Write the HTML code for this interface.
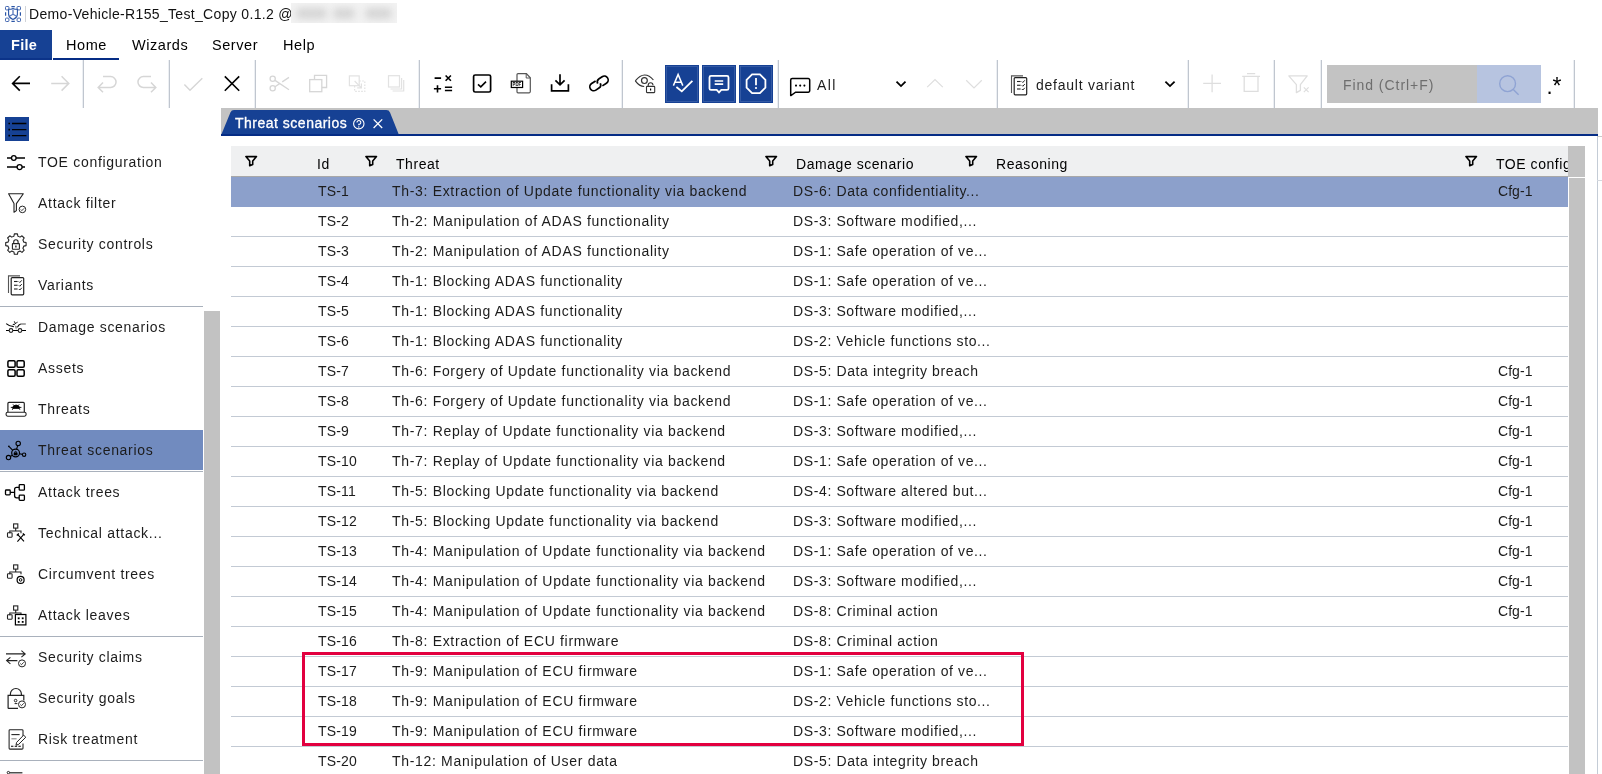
<!DOCTYPE html><html><head><meta charset="utf-8"><title>Threat scenarios</title><style>
*{box-sizing:border-box;margin:0;padding:0}
html,body{width:1602px;height:774px;overflow:hidden;background:#fff}
body{font-family:"Liberation Sans",sans-serif;font-size:14px;color:#1c1c1c;position:relative}
#w{position:absolute;left:0;top:0;width:1602px;height:774px;overflow:hidden;transform:translateZ(0)}
.g{position:absolute;left:0;top:0}
.a{position:absolute;white-space:nowrap}
.t{position:absolute;white-space:nowrap;line-height:20px;height:20px;letter-spacing:.6px}
.menu .t{top:35px;font-size:14.5px;letter-spacing:.55px;color:#000}
.sep{position:absolute;width:2px;top:60px;height:48px;background:linear-gradient(90deg,#eceff3 0,#eceff3 50%,#c0c6cf 50%,#c0c6cf 100%)}
.sl{position:absolute;height:1px;left:0;width:203px;background:#a9b1bc}
.item{position:absolute;left:0;width:203px;height:40px}
.item.sel{background:#718bbf}
.item span{position:absolute;left:38px;top:10px;line-height:20px;white-space:nowrap;letter-spacing:.7px}
.hd{position:absolute;left:231px;top:146px;width:1337px;height:31px;background:#eff0f1;border-bottom:1px solid #a8a8a8}
.hd span{position:absolute;top:8px;line-height:20px;white-space:nowrap;color:#000;letter-spacing:.55px}
.row{position:absolute;left:231px;width:1337px;height:30px;border-bottom:1px solid #c3cad4}
.row.sel{background:#8ca0cb;border-bottom-color:#8ca0cb}
.row span{position:absolute;top:4px;line-height:20px;white-space:nowrap}
.c1{left:87px;letter-spacing:.15px}
.c2{left:161px;letter-spacing:.68px}
.c3{left:562px;letter-spacing:.62px}
.c4{left:1267px;letter-spacing:.05px}
#ov{position:absolute;left:0;top:0;overflow:visible}
</style></head><body><div id="w">
<div class="g titlebar">
<div class="a" style="left:25px;top:6px;width:1px;height:16px;background:#d0d3d8"></div>
<div class="t" style="left:29px;top:4px;letter-spacing:.33px;color:#111">Demo-Vehicle-R155_Test_Copy 0.1.2 @</div>
<div class="a" style="left:291px;top:3px;width:106px;height:20px;background:#f2f2f2;overflow:hidden"><div class="a" style="left:5px;top:5px;width:31px;height:11px;background:#d6d6d6;filter:blur(3.5px);border-radius:5px"></div><div class="a" style="left:42px;top:5px;width:22px;height:11px;background:#d6d6d6;filter:blur(3.5px);border-radius:5px"></div><div class="a" style="left:74px;top:5px;width:27px;height:11px;background:#d6d6d6;filter:blur(3.5px);border-radius:5px"></div></div>
</div>
<div class="g menu">
<div class="a" style="left:0;top:30px;width:52px;height:30px;background:#164194;border-bottom:2px solid #0b3389"></div>
<div class="t" style="left:11px;color:#fff;font-weight:bold;letter-spacing:.3px">File</div>
<div class="a" style="left:53px;top:58px;width:66px;height:2px;background:#052c85"></div>
<div class="t" style="left:66px">Home</div>
<div class="t" style="left:132px">Wizards</div>
<div class="t" style="left:212px">Server</div>
<div class="t" style="left:283px">Help</div>
</div>
<div class="g toolbar">
<div class="sep" style="left:82px"></div>
<div class="sep" style="left:168px"></div>
<div class="sep" style="left:254px"></div>
<div class="sep" style="left:418px"></div>
<div class="sep" style="left:621px"></div>
<div class="sep" style="left:777px"></div>
<div class="sep" style="left:996px"></div>
<div class="sep" style="left:1187px"></div>
<div class="sep" style="left:1273px"></div>
<div class="sep" style="left:1320px"></div>
<div class="sep" style="left:1573px"></div>
<div class="t" style="left:817px;top:75px;letter-spacing:1.4px">All</div>
<div class="t" style="left:1036px;top:75px;letter-spacing:.75px">default variant</div>
<div class="a" style="left:1327px;top:65px;width:150px;height:38px;background:#c3c3c3"></div>
<div class="a" style="left:1477px;top:65px;width:64px;height:38px;background:#b7c4e0"></div>
<div class="t" style="left:1343px;top:75px;color:#6e6e6e;letter-spacing:.95px">Find (Ctrl+F)</div>
<div class="t" style="left:1546.5px;top:77px;font-size:22px;color:#000;letter-spacing:0">.</div>
<div class="t" style="left:1552.5px;top:76px;font-size:23px;color:#000;letter-spacing:0">*</div>
</div>
<div class="g sidebar">
<div class="a" style="left:5px;top:117px;width:24px;height:24px;background:#164194"></div>
<div class="sl" style="top:306px"></div>
<div class="sl" style="top:471px"></div>
<div class="sl" style="top:636px"></div>
<div class="sl" style="top:760px"></div>
<div class="item" style="top:142px"><span>TOE configuration</span></div>
<div class="item" style="top:183px"><span>Attack filter</span></div>
<div class="item" style="top:224px"><span>Security controls</span></div>
<div class="item" style="top:265px"><span>Variants</span></div>
<div class="item" style="top:307px"><span>Damage scenarios</span></div>
<div class="item" style="top:348px"><span>Assets</span></div>
<div class="item" style="top:389px"><span>Threats</span></div>
<div class="item sel" style="top:430px"><span>Threat scenarios</span></div>
<div class="item" style="top:472px"><span>Attack trees</span></div>
<div class="item" style="top:513px"><span>Technical attack...</span></div>
<div class="item" style="top:554px"><span>Circumvent trees</span></div>
<div class="item" style="top:595px"><span>Attack leaves</span></div>
<div class="item" style="top:637px"><span>Security claims</span></div>
<div class="item" style="top:678px"><span>Security goals</span></div>
<div class="item" style="top:719px"><span>Risk treatment</span></div>
<div class="a" style="left:204px;top:311px;width:16px;height:463px;background:#c2c2c2"></div>
</div>
<div class="g tabs">
<div class="a" style="left:221px;top:108px;width:1377px;height:28px;background:#c3c3c3;border-bottom:2px solid #052c85"></div>
<div class="a" style="left:1597px;top:136px;width:1px;height:638px;background:#c4ccd6"></div>
<div class="a" style="left:1597px;top:136px;width:5px;height:1px;background:#c9c9c9"></div>
<div class="a" style="left:1597px;top:180px;width:5px;height:1px;background:#d5d9df"></div>
</div>
<div class="g grid">
<div class="hd">
<span style="left:86px">Id</span>
<span style="left:165px">Threat</span>
<span style="left:565px">Damage scenario</span>
<span style="left:765px">Reasoning</span>
<span style="left:1265px;width:72px;overflow:hidden">TOE config</span>
</div>
<div class="a" style="left:1568px;top:146px;width:17px;height:31px;background:#c2c2c2"></div>
<div class="a" style="left:1569px;top:178px;width:16px;height:596px;background:#c2c2c2"></div>
<div class="row sel" style="top:177px"><span class="c1">TS-1</span><span class="c2">Th-3: Extraction of Update functionality via backend</span><span class="c3">DS-6: Data confidentiality...</span><span class="c4">Cfg-1</span></div>
<div class="row" style="top:207px"><span class="c1">TS-2</span><span class="c2">Th-2: Manipulation of ADAS functionality</span><span class="c3">DS-3: Software modified,...</span></div>
<div class="row" style="top:237px"><span class="c1">TS-3</span><span class="c2">Th-2: Manipulation of ADAS functionality</span><span class="c3">DS-1: Safe operation of ve...</span></div>
<div class="row" style="top:267px"><span class="c1">TS-4</span><span class="c2">Th-1: Blocking ADAS functionality</span><span class="c3">DS-1: Safe operation of ve...</span></div>
<div class="row" style="top:297px"><span class="c1">TS-5</span><span class="c2">Th-1: Blocking ADAS functionality</span><span class="c3">DS-3: Software modified,...</span></div>
<div class="row" style="top:327px"><span class="c1">TS-6</span><span class="c2">Th-1: Blocking ADAS functionality</span><span class="c3">DS-2: Vehicle functions sto...</span></div>
<div class="row" style="top:357px"><span class="c1">TS-7</span><span class="c2">Th-6: Forgery of Update functionality via backend</span><span class="c3">DS-5: Data integrity breach</span><span class="c4">Cfg-1</span></div>
<div class="row" style="top:387px"><span class="c1">TS-8</span><span class="c2">Th-6: Forgery of Update functionality via backend</span><span class="c3">DS-1: Safe operation of ve...</span><span class="c4">Cfg-1</span></div>
<div class="row" style="top:417px"><span class="c1">TS-9</span><span class="c2">Th-7: Replay of Update functionality via backend</span><span class="c3">DS-3: Software modified,...</span><span class="c4">Cfg-1</span></div>
<div class="row" style="top:447px"><span class="c1">TS-10</span><span class="c2">Th-7: Replay of Update functionality via backend</span><span class="c3">DS-1: Safe operation of ve...</span><span class="c4">Cfg-1</span></div>
<div class="row" style="top:477px"><span class="c1">TS-11</span><span class="c2">Th-5: Blocking Update functionality via backend</span><span class="c3">DS-4: Software altered but...</span><span class="c4">Cfg-1</span></div>
<div class="row" style="top:507px"><span class="c1">TS-12</span><span class="c2">Th-5: Blocking Update functionality via backend</span><span class="c3">DS-3: Software modified,...</span><span class="c4">Cfg-1</span></div>
<div class="row" style="top:537px"><span class="c1">TS-13</span><span class="c2">Th-4: Manipulation of Update functionality via backend</span><span class="c3">DS-1: Safe operation of ve...</span><span class="c4">Cfg-1</span></div>
<div class="row" style="top:567px"><span class="c1">TS-14</span><span class="c2">Th-4: Manipulation of Update functionality via backend</span><span class="c3">DS-3: Software modified,...</span><span class="c4">Cfg-1</span></div>
<div class="row" style="top:597px"><span class="c1">TS-15</span><span class="c2">Th-4: Manipulation of Update functionality via backend</span><span class="c3">DS-8: Criminal action</span><span class="c4">Cfg-1</span></div>
<div class="row" style="top:627px"><span class="c1">TS-16</span><span class="c2">Th-8: Extraction of ECU firmware</span><span class="c3">DS-8: Criminal action</span></div>
<div class="row" style="top:657px"><span class="c1">TS-17</span><span class="c2">Th-9: Manipulation of ECU firmware</span><span class="c3">DS-1: Safe operation of ve...</span></div>
<div class="row" style="top:687px"><span class="c1">TS-18</span><span class="c2">Th-9: Manipulation of ECU firmware</span><span class="c3">DS-2: Vehicle functions sto...</span></div>
<div class="row" style="top:717px"><span class="c1">TS-19</span><span class="c2">Th-9: Manipulation of ECU firmware</span><span class="c3">DS-3: Software modified,...</span></div>
<div class="row" style="top:747px"><span class="c1">TS-20</span><span class="c2">Th-12: Manipulation of User data</span><span class="c3">DS-5: Data integrity breach</span></div>
<div class="a" style="left:302px;top:652px;width:722px;height:94px;border:3px solid #e2003f"></div>
</div>
<svg id="ov" width="1602" height="774" viewBox="0 0 1602 774" fill="none" stroke-linecap="butt"><path d="M221.6 134L230.4 112.4Q231.4 110 234 110H386.4Q389 110 390 112.4L398.6 134Z" fill="#164194"/><rect x="5.5" y="6.5" width="3.4" height="3.4" rx="0.8" stroke="#3a60ac" stroke-width="0.95" fill="none" /><rect x="17.1" y="6.5" width="3.4" height="3.4" rx="0.8" stroke="#3a60ac" stroke-width="0.95" fill="none" /><rect x="5.5" y="18.1" width="3.4" height="3.4" rx="0.8" stroke="#3a60ac" stroke-width="0.95" fill="none" /><rect x="17.1" y="18.1" width="3.4" height="3.4" rx="0.8" stroke="#3a60ac" stroke-width="0.95" fill="none" /><path d="M11.4 6.6H14.8 M11.4 21.4H14.8 M5.6 12.3V15.7 M20.4 12.3V15.7" stroke="#2a55a6" stroke-width="1.2" fill="none" /><path d="M13 8.4L15 9.3H17.4V14.4Q17.2 17.6 13 19.4Q8.8 17.6 8.6 14.4V9.3H11Z" stroke="#2a55a6" stroke-width="1.1" fill="none" stroke-linejoin="round"/><path d="M13 9.6V14.2 M13 14.2L9.4 16.3 M13 14.2L16.6 16.3" stroke="#5b7bbd" stroke-width="1.3" fill="none" /><path d="M30 83.4H13 M19.8 76.2L12.6 83.4L19.8 90.6" stroke="#000" stroke-width="1.6" fill="none" /><path d="M51.2 83.4H68.4 M61.6 76.2L68.8 83.4L61.6 90.6" stroke="#d6d6d6" stroke-width="1.5" fill="none" /><path d="M103 76.6H110.6A5.45 5.45 0 0 1 110.6 87.5H98.6 M103 82.6L98.2 87.5L103 92.3" stroke="#d6d6d6" stroke-width="1.5" fill="none" /><path d="M151 76.6H143.4A5.45 5.45 0 0 0 143.4 87.5H155.4 M151 82.6L155.8 87.5L151 92.3" stroke="#d6d6d6" stroke-width="1.5" fill="none" /><path d="M184.4 84.6L190 90.3L202.3 78.2" stroke="#d6d6d6" stroke-width="1.4" fill="none" /><path d="M224.8 76.4L239.2 90.7 M239.2 76.4L224.8 90.7" stroke="#000" stroke-width="1.6" fill="none" /><circle cx="272.7" cy="78.8" r="2.6" stroke="#d6d6d6" stroke-width="1.3" fill="none"/><circle cx="272.7" cy="88.3" r="2.6" stroke="#d6d6d6" stroke-width="1.3" fill="none"/><path d="M275 80.4L289 89.8 M275 86.7L280 83.4 M282.2 81.9L289 77.4" stroke="#d6d6d6" stroke-width="1.3" fill="none" /><path d="M314.5 79.4V75.4H326.6V87.5H322" stroke="#d6d6d6" stroke-width="1.3" fill="none" /><rect x="309.7" y="79.6" width="12.1" height="12.1" rx="0" stroke="#d6d6d6" stroke-width="1.3" fill="none" /><rect x="349.4" y="75.9" width="9.8" height="9.8" rx="0" stroke="#e2e2e2" stroke-width="1.2" fill="none" /><path d="M359.2 81H364.8V91.4H354.6V85.7" stroke="#e2e2e2" stroke-width="1.2" fill="none" stroke-dasharray="1.6 1.4"/><path d="M354.6 81L361.4 87.8 M361.4 83.6V87.8H357.2" stroke="#e2e2e2" stroke-width="1.2" fill="none" /><rect x="388.5" y="75.7" width="11" height="11.3" rx="0" stroke="#e2e2e2" stroke-width="1.2" fill="none" /><path d="M390.5 89H401.6V78 M392.6 91H403.7V80" stroke="#e2e2e2" stroke-width="1.2" fill="none" /><path d="M434.6 78.1H441.1 M445.6 75.5L450.9 80.8 M450.9 75.5L445.6 80.8 M433.9 88.8H441.1 M437.5 85.2V92.4 M444.9 87.3H452.1 M444.9 90.5H452.1" stroke="#000" stroke-width="1.6" fill="none" /><rect x="473.6" y="75" width="17" height="17" rx="1.6" stroke="#000" stroke-width="1.7" fill="none" /><path d="M478 84.3L480.8 86.8L486 81.6" stroke="#000" stroke-width="1.6" fill="none" /><path d="M517 81V74.6Q517 73.6 518 73.6H526.4L530.3 77.8V91.6Q530.3 92.8 529.2 92.8H518Q517 92.8 517 91.8V87.6" stroke="#555" stroke-width="1.2" fill="none" /><path d="M526.2 73.8V78H530.2" stroke="#555" stroke-width="1" fill="none" /><rect x="511.3" y="81.2" width="11.3" height="6.3" rx="0" stroke="#000" stroke-width="1.2" fill="#fff" /><text x="512.6" y="86.3" font-family="Liberation Sans,sans-serif" font-size="4.6" font-weight="bold" fill="#000" textLength="8.6" lengthAdjust="spacingAndGlyphs">PDF</text><path d="M560 74.2V84.6 M555.4 80.3L560 84.9L564.6 80.3 M551.6 84.3V90.8H568.4V84.3" stroke="#000" stroke-width="1.7" fill="none" /><g transform="translate(599 83.4) rotate(-33)" fill="none" stroke="#000" stroke-width="1.7"><path d="M-1.5 -3.9H-6.3A3.9 3.9 0 0 0 -6.3 3.9H-2.6A3.9 3.9 0 0 0 1.2 0.6"/><path d="M1.5 3.9H6.3A3.9 3.9 0 0 0 6.3 -3.9H2.6A3.9 3.9 0 0 0 -1.2 -0.6"/></g><path d="M635.3 80.8Q640 75 644.6 75Q649.4 75 653.4 80 M635.3 80.8Q639.5 86.4 644.2 86.5" stroke="#333" stroke-width="1.2" fill="none" /><circle cx="644.4" cy="80.6" r="2.9" stroke="#333" stroke-width="1.2" fill="none"/><rect x="646.5" y="86.4" width="8.2" height="6.2" rx="0.6" stroke="#333" stroke-width="1.1" fill="#fff" /><path d="M648.2 86.2V85.2A2.4 2.4 0 0 1 653 85.2" stroke="#333" stroke-width="1.1" fill="none" /><path d="M650.6 88.6V90.4" stroke="#000" stroke-width="1.2" fill="none" /><rect x="665" y="65" width="34" height="38" fill="#164194"/><rect x="666.5" y="66.5" width="31" height="35" fill="none" stroke="#4a6bb0" stroke-width="0.6"/><rect x="702" y="65" width="34" height="38" fill="#164194"/><rect x="703.5" y="66.5" width="31" height="35" fill="none" stroke="#4a6bb0" stroke-width="0.6"/><rect x="739" y="65" width="34" height="38" fill="#164194"/><rect x="740.5" y="66.5" width="31" height="35" fill="none" stroke="#4a6bb0" stroke-width="0.6"/><path d="M673.4 85.6L678.1 74.4L682.8 85.6 M674.9 82.2H681.3" stroke="#fff" stroke-width="1.5" fill="none" /><path d="M676.4 87L681.8 91.4L692.4 80.8" stroke="#fff" stroke-width="1.8" fill="none" /><path d="M711 75.9H727A1.5 1.5 0 0 1 728.5 77.4V88.4A1.5 1.5 0 0 1 727 89.9H721.3L719 92.4L716.7 89.9H711A1.5 1.5 0 0 1 709.5 88.4V77.4A1.5 1.5 0 0 1 711 75.9Z" stroke="#fff" stroke-width="1.8" fill="none" /><path d="M714.7 81H723.2 M714.7 84.2H723.2" stroke="#fff" stroke-width="1.7" fill="none" /><path d="M765.4 87.7L759.9 93.2L752.1 93.2L746.6 87.7L746.6 79.9L752.1 74.4L759.9 74.4L765.4 79.9Z" stroke="#fff" stroke-width="1.8" fill="none" /><path d="M756 78V85.2" stroke="#fff" stroke-width="1.8" fill="none" /><circle cx="756" cy="88" r="1.1" stroke="none" stroke-width="0" fill="#fff"/><path d="M792.2 78.6H808.2A1.5 1.5 0 0 1 809.7 80.1V90.7A1.5 1.5 0 0 1 808.2 92.2H795.6L791 95.6A0.3 0.3 0 0 1 790.7 95.4V80.1A1.5 1.5 0 0 1 792.2 78.6Z" stroke="#000" stroke-width="1.5" fill="none" /><circle cx="796" cy="85.6" r="1.05" stroke="none" stroke-width="0" fill="#000"/><circle cx="800.2" cy="85.6" r="1.05" stroke="none" stroke-width="0" fill="#000"/><circle cx="804.4" cy="85.6" r="1.05" stroke="none" stroke-width="0" fill="#000"/><path d="M896.5 81.6L901 86.1L905.5 81.6" stroke="#000" stroke-width="1.8" fill="none" /><path d="M1165.4 81.6L1170 86.1L1174.6 81.6" stroke="#000" stroke-width="1.8" fill="none" /><path d="M927.2 87.1L935 79.5L942.8 87.1" stroke="#dedede" stroke-width="1.2" fill="none" /><path d="M966.2 80.3L974 88L981.8 80.3" stroke="#dedede" stroke-width="1.2" fill="none" /><path d="M1011.5 92.9V75.9H1023" stroke="#555" stroke-width="1.1" fill="none" /><rect x="1014.2" y="77.60000000000001" width="12.5" height="17.2" rx="1" stroke="#222" stroke-width="1.2" fill="none" /><path d="M1017 81.5H1020.6" stroke="#222" stroke-width="1.1" fill="none" /><path d="M1021.8 81.5l1 1l2 -2.2" stroke="#222" stroke-width="1" fill="none" /><path d="M1017 85.25H1020.6" stroke="#222" stroke-width="1.1" fill="none" /><path d="M1021.8 85.25l1 1l2 -2.2" stroke="#222" stroke-width="1" fill="none" /><path d="M1017 89.0H1020.6" stroke="#222" stroke-width="1.1" fill="none" /><path d="M1021.8 89.0l1 1l2 -2.2" stroke="#222" stroke-width="1" fill="none" /><path d="M1203.2 83.4H1221 M1212.1 74.5V92.3" stroke="#dedede" stroke-width="1.3" fill="none" /><path d="M1247 73.6H1255.2 M1242.2 76.4H1260 M1244.2 76.4V91.4H1258V76.4" stroke="#dedede" stroke-width="1.3" fill="none" /><path d="M1288.8 75.9H1307.2L1300.4 84.6V90.4L1296.4 92.6V84.6Z" stroke="#dedede" stroke-width="1.3" fill="none" stroke-linejoin="round"/><path d="M1303.8 87.4L1308.6 92.2 M1308.6 87.4L1303.8 92.2" stroke="#dedede" stroke-width="1.2" fill="none" /><circle cx="1507.6" cy="83.7" r="7.9" stroke="#8fa3d3" stroke-width="1.4" fill="none"/><path d="M1513.3 89.4L1518.6 94.7" stroke="#8fa3d3" stroke-width="1.4" fill="none" /><path d="M12 123.5H26.4 M12 129.6H26.4 M12 135.6H26.4" stroke="#000" stroke-width="1.4" fill="none" /><path d="M8.4 123.5H10 M8.4 129.6H10 M8.4 135.6H10" stroke="#000" stroke-width="1.6" fill="none" /><path d="M7 158H25 M7 167.1H25" stroke="#000" stroke-width="1.5" fill="none" /><circle cx="13.8" cy="158" r="2.3" stroke="#000" stroke-width="1.3" fill="#fff"/><circle cx="19.6" cy="167.1" r="2.5" stroke="#000" stroke-width="1.3" fill="#fff"/><path d="M8.6 193.8H23.3L16.4 203.6V210.6L14 212.2V203.6Z" stroke="#222" stroke-width="1.1" fill="none" stroke-linejoin="round"/><circle cx="22.4" cy="209.4" r="3.3" stroke="#222" stroke-width="1" fill="#fff"/><path d="M20.8 209.5l1.1 1.1l2.1 -2.2" stroke="#222" stroke-width="0.9" fill="none" /><path d="M13.90 236.25L14.36 233.92L17.44 233.92L17.90 236.25A8.1 8.1 0 0 1 20.03 237.13L20.03 237.13L22.01 235.81L24.19 237.99L22.87 239.97A8.1 8.1 0 0 1 23.75 242.10L23.75 242.10L26.08 242.56L26.08 245.64L23.75 246.10A8.1 8.1 0 0 1 22.87 248.23L22.87 248.23L24.19 250.21L22.01 252.39L20.03 251.07A8.1 8.1 0 0 1 17.90 251.95L17.90 251.95L17.44 254.28L14.36 254.28L13.90 251.95A8.1 8.1 0 0 1 11.77 251.07L11.77 251.07L9.79 252.39L7.61 250.21L8.93 248.23A8.1 8.1 0 0 1 8.05 246.10L8.05 246.10L5.72 245.64L5.72 242.56L8.05 242.10A8.1 8.1 0 0 1 8.93 239.97L8.93 239.97L7.61 237.99L9.79 235.81L11.77 237.13A8.1 8.1 0 0 1 13.90 236.25Z" stroke="#222" stroke-width="1.1" fill="none" stroke-linejoin="round"/><rect x="12.4" y="243.6" width="7" height="5.6" rx="0.5" stroke="#222" stroke-width="1.1" fill="none" /><path d="M13.7 243.6V242A2.2 2.2 0 0 1 18.1 242V243.6" stroke="#222" stroke-width="1.1" fill="none" /><path d="M15.9 245.4V247.4" stroke="#000" stroke-width="1.2" fill="none" /><path d="M8.5 292.9V275.9H20" stroke="#555" stroke-width="1.1" fill="none" /><rect x="11.2" y="277.59999999999997" width="12.5" height="17.2" rx="1" stroke="#222" stroke-width="1.2" fill="none" /><path d="M14 281.5H17.6" stroke="#222" stroke-width="1.1" fill="none" /><path d="M18.8 281.5l1 1l2 -2.2" stroke="#222" stroke-width="1" fill="none" /><path d="M14 285.25H17.6" stroke="#222" stroke-width="1.1" fill="none" /><path d="M18.8 285.25l1 1l2 -2.2" stroke="#222" stroke-width="1" fill="none" /><path d="M14 289.0H17.6" stroke="#222" stroke-width="1.1" fill="none" /><path d="M18.8 289.0l1 1l2 -2.2" stroke="#222" stroke-width="1" fill="none" /><path d="M6 330.5H9.2 M12.8 330.5H18.2 M21.8 330.5H26" stroke="#000" stroke-width="1.2" fill="none" /><circle cx="11" cy="330.5" r="1.85" stroke="#222" stroke-width="1.1" fill="none"/><circle cx="20" cy="330.5" r="1.85" stroke="#222" stroke-width="1.1" fill="none"/><path d="M6.2 323.7Q9 326.3 13.8 326.6" stroke="#000" stroke-width="1.1" fill="none" /><path d="M20.8 324H25.8" stroke="#777" stroke-width="1.3" fill="none" /><path d="M20.8 324Q18.4 324.4 17.4 327.4" stroke="#000" stroke-width="1.2" fill="none" /><path d="M14.3 321.4L15.5 323.7L16.5 322.7L17.5 322.2 M12.8 324.5L15 324.2" stroke="#000" stroke-width="1.0" fill="none" /><path d="M14.6 325.2L16.1 330L17.1 326.4Z" stroke="none" stroke-width="0" fill="#8a8a8a" /><rect x="7.9" y="360.8" width="7.2" height="6.5" rx="1.2" stroke="#000" stroke-width="1.5" fill="none" /><rect x="7.9" y="369.8" width="7.2" height="6.5" rx="1.2" stroke="#000" stroke-width="1.5" fill="none" /><rect x="17.0" y="360.8" width="7.2" height="6.5" rx="1.2" stroke="#000" stroke-width="1.5" fill="none" /><rect x="17.0" y="369.8" width="7.2" height="6.5" rx="1.2" stroke="#000" stroke-width="1.5" fill="none" /><path d="M7.9 412V403.4Q7.9 402.4 8.9 402.4H23.3Q24.3 402.4 24.3 403.4V412" stroke="#222" stroke-width="1.2" fill="none" /><rect x="6.1" y="412.2" width="20" height="4" rx="1.6" stroke="#222" stroke-width="1.1" fill="none" /><path d="M12.6 408.4Q12.6 405 16.1 405Q19.6 405 19.6 408.4Z" stroke="#000" stroke-width="0.8" fill="#000" /><path d="M10.8 407.4H21.4 M12.2 409.8L13.4 408.4 M20 409.8L18.8 408.4 M13 404.4L14 405.4 M19.2 404.4L18.2 405.4" stroke="#000" stroke-width="0.9" fill="none" /><path d="M16.6 449.2L17.7 445.6 M19.5 453.8L22.4 454.4 M12.4 455.2L10.2 456.4 M12.8 450.4L9.4 446.8" stroke="#000" stroke-width="1.1" fill="none" /><circle cx="15.6" cy="453" r="3.9" stroke="#000" stroke-width="1.2" fill="none"/><circle cx="18.2" cy="443.4" r="2.2" stroke="#000" stroke-width="1.1" fill="none"/><circle cx="24.1" cy="454.7" r="1.7" stroke="#000" stroke-width="1.1" fill="none"/><circle cx="8.5" cy="457.6" r="2.2" stroke="#000" stroke-width="1.1" fill="none"/><circle cx="8.9" cy="446.3" r="0.9" stroke="none" stroke-width="0" fill="#000"/><path d="M14 455V452.8H17.2V455Z" stroke="#000" stroke-width="0.6" fill="#000" /><path d="M14.7 452.8V452.2A0.9 0.9 0 0 1 16.5 452.2V452.8" stroke="#000" stroke-width="0.8" fill="none" /><rect x="5.5" y="490" width="4.7" height="4.9" rx="0.8" stroke="#000" stroke-width="1.3" fill="none" /><rect x="19.2" y="484.6" width="5.2" height="5.6" rx="0.8" stroke="#000" stroke-width="1.3" fill="none" /><rect x="19.2" y="495.2" width="5.2" height="5.2" rx="0.8" stroke="#000" stroke-width="1.3" fill="none" /><path d="M10.2 492.4H14.6 M19.2 487.4H16.6Q14.6 487.4 14.6 489.4V495.8Q14.6 497.8 16.6 497.8H19.2" stroke="#000" stroke-width="1.3" fill="none" /><rect x="13.6" y="523.9" width="4.2" height="4.2" rx="0" stroke="#222" stroke-width="1.1" fill="none" /><path d="M15.7 528.1V531 M9.8 533.2V531H21V533.2" stroke="#222" stroke-width="1.1" fill="none" /><rect x="7.5" y="532.8" width="4.6" height="4.4" rx="0.6" stroke="#222" stroke-width="1.1" fill="none" /><path d="M17.8 534.6L24 541.4 M24 534.2L17.4 541.6" stroke="#000" stroke-width="1.1" fill="none" /><path d="M16.8 535.4L18.8 533.6 M22.8 533.4L24.8 535.2" stroke="#000" stroke-width="1.3" fill="none" /><rect x="13.6" y="564.9" width="4.2" height="4.2" rx="0" stroke="#222" stroke-width="1.1" fill="none" /><path d="M15.7 569.1V572 M9.8 574.2V572H21V574.2" stroke="#222" stroke-width="1.1" fill="none" /><rect x="7.5" y="573.8" width="4.6" height="4.4" rx="0.6" stroke="#222" stroke-width="1.1" fill="none" /><circle cx="20.6" cy="579.9" r="3.5" stroke="#000" stroke-width="1.2" fill="none"/><circle cx="20.6" cy="579.9" r="1.3" stroke="#000" stroke-width="1" fill="none"/><rect x="13.6" y="605.9" width="4.2" height="4.2" rx="0" stroke="#222" stroke-width="1.1" fill="none" /><path d="M15.7 610.1V613 M9.8 615.2V613H21V615.2" stroke="#222" stroke-width="1.1" fill="none" /><rect x="7.5" y="614.8" width="4.6" height="4.4" rx="0.6" stroke="#222" stroke-width="1.1" fill="none" /><rect x="15.4" y="614.5" width="10.5" height="10.4" rx="0" stroke="#000" stroke-width="1.2" fill="#fff" /><rect x="17.8" y="617.4" width="1.8" height="1.8" rx="0" stroke="none" stroke-width="0" fill="#000" /><rect x="17.8" y="621" width="1.8" height="1.8" rx="0" stroke="none" stroke-width="0" fill="#000" /><rect x="21.8" y="617.4" width="1.8" height="1.8" rx="0" stroke="none" stroke-width="0" fill="#000" /><rect x="21.8" y="621" width="1.8" height="1.8" rx="0" stroke="none" stroke-width="0" fill="#000" /><path d="M6 653.9H25 M21.4 650.6L25.2 653.9L21.4 657.2" stroke="#222" stroke-width="1.1" fill="none" /><path d="M17.4 660.6H7 M10.4 657.3L6.6 660.6L10.4 663.9" stroke="#222" stroke-width="1.1" fill="none" /><circle cx="22" cy="663.4" r="3.5" stroke="#222" stroke-width="1" fill="#fff"/><path d="M20.3 663.5l1.2 1.2l2.2 -2.4" stroke="#222" stroke-width="0.9" fill="none" /><path d="M8.1 708.4V695.4H23.8V700.4 M8.1 708.4H18" stroke="#222" stroke-width="1.2" fill="none" /><path d="M10.4 695.4V694A5.5 5.5 0 0 1 21.4 694V695.4" stroke="#222" stroke-width="1.2" fill="none" /><circle cx="15.6" cy="700.6" r="1.3" stroke="#222" stroke-width="1" fill="none"/><path d="M14.6 703.6H17.4" stroke="#222" stroke-width="1" fill="none" /><circle cx="22" cy="704.4" r="3.5" stroke="#222" stroke-width="1" fill="#fff"/><path d="M20.3 704.5l1.2 1.2l2.2 -2.4" stroke="#222" stroke-width="0.9" fill="none" /><path d="M23 736V730.6Q23 729.7 22 729.7H10Q9.1 729.7 9.1 730.6V748.2Q9.1 749.1 10 749.1H22Q23 749.1 23 748.2V743.4" stroke="#222" stroke-width="1.05" fill="none" /><path d="M11.4 734.6H19.6" stroke="#222" stroke-width="1.1" fill="none" /><path d="M11.4 738.8H16.6" stroke="#888" stroke-width="1.1" fill="none" /><path d="M11 746.2H21.4" stroke="#000" stroke-width="1.1" fill="none" stroke-dasharray="2.4 1.3"/><path d="M23.6 735.2L25.8 737.2L18.6 744.4L16 745.2L16.6 742.4Z" stroke="#222" stroke-width="1" fill="#fff" stroke-linejoin="round"/><circle cx="8.4" cy="772.6" r="1.2" stroke="#222" stroke-width="1" fill="none"/><path d="M9.6 772.8H22.4" stroke="#222" stroke-width="1.2" fill="none" /><circle cx="358.8" cy="123.7" r="5.2" stroke="#fff" stroke-width="1.1" fill="none"/><path d="M357 122.4A1.9 1.9 0 1 1 358.8 124.3V125.3" stroke="#fff" stroke-width="1.1" fill="none" /><circle cx="358.8" cy="127" r="0.7" stroke="none" stroke-width="0" fill="#fff"/><path d="M373.6 119.4L382.2 128 M382.2 119.4L373.6 128" stroke="#fff" stroke-width="1.3" fill="none" /><path d="M245.89999999999998 156.6H256.5L252.7 161.0V164.39999999999998L249.7 165.7V161.0Z" stroke="#000" stroke-width="1.6" fill="#f8f8f8" stroke-linejoin="round"/><path d="M365.9 156.6H376.5L372.7 161.0V164.39999999999998L369.7 165.7V161.0Z" stroke="#000" stroke-width="1.6" fill="#f8f8f8" stroke-linejoin="round"/><path d="M765.9000000000001 156.6H776.5L772.7 161.0V164.39999999999998L769.7 165.7V161.0Z" stroke="#000" stroke-width="1.6" fill="#f8f8f8" stroke-linejoin="round"/><path d="M965.9000000000001 156.6H976.5L972.7 161.0V164.39999999999998L969.7 165.7V161.0Z" stroke="#000" stroke-width="1.6" fill="#f8f8f8" stroke-linejoin="round"/><path d="M1465.9 156.6H1476.5L1472.7 161.0V164.39999999999998L1469.7 165.7V161.0Z" stroke="#000" stroke-width="1.6" fill="#f8f8f8" stroke-linejoin="round"/></svg>
<div class="t" style="left:235px;top:113px;color:#fff;font-size:14px;letter-spacing:.5px;-webkit-text-stroke:.3px #fff">Threat scenarios</div>
</div></body></html>
